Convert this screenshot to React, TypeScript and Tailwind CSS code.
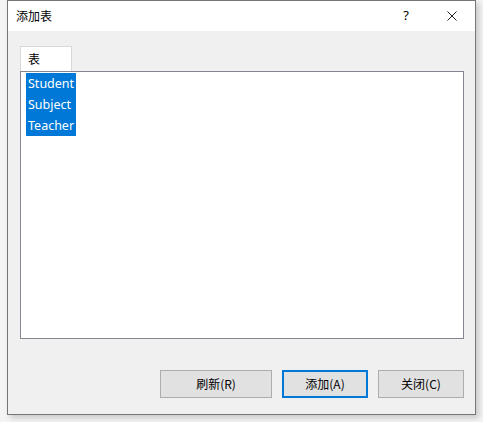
import { useState } from 'react'

const items = ['Student', 'Subject', 'Teacher']

export default function App() {
  const [selected] = useState(items)

  return (
    <div
      className="w-[483px] h-[422px] bg-[#f4f4f4] pl-[7px]"
      style={{ fontFamily: '"Noto Sans", "Noto Sans CJK SC", sans-serif' }}
    >
      <div className="w-[469px] h-[415px] flex flex-col border border-[#767676] bg-[#f0f0f0] shadow-[3px_3px_6px_rgba(0,0,0,0.18)]">
        {/* 标题栏 */}
        <div className="h-[30px] bg-white flex items-center pl-[8px] text-[12px] text-black">
          <span className="flex-1" style={{ fontFamily: '"Noto Sans CJK SC", sans-serif' }}>添加表</span>
          <span className="w-[20px] text-center text-[13px] mr-[31px]">?</span>
          <svg className="w-[10px] h-[10px] mr-[18px]" viewBox="0 0 10 10" fill="none" stroke="#222" strokeWidth="1">
            <path d="M0.5 0.5L9.5 9.5M9.5 0.5L0.5 9.5" />
          </svg>
        </div>

        {/* 内容 */}
        <div className="flex-1 flex flex-col pl-[12px] pt-[15px]">
          <div
            className="w-[52px] h-[25px] bg-white border border-b-0 border-[#d9d9d9] flex items-center pl-[7px] text-[12px] text-black"
            style={{ fontFamily: '"Noto Sans CJK SC", sans-serif' }}
          >
            表
          </div>
          <div className="w-[444px] h-[268px] bg-white border border-[#828790] pl-[5px] pt-[1px]">
            <div className="w-[50px] bg-[#0078d7] text-white">
              {selected.map((name) => (
                <div key={name} className="h-[21px] leading-[21px] text-[12.5px] pl-[2px] whitespace-nowrap">
                  {name}
                </div>
              ))}
            </div>
          </div>

          <div className="flex justify-end gap-[10px] w-[444px] mt-[31px] text-[12px] text-black" style={{ fontFamily: '"Noto Sans CJK SC", sans-serif' }}>
            <button className="w-[112px] h-[28px] bg-[#e1e1e1] border border-[#adadad]">刷新(R)</button>
            <button className="w-[86px] h-[28px] bg-[#e1e1e1] border-2 border-[#0078d7]">添加(A)</button>
            <button className="w-[86px] h-[28px] bg-[#e1e1e1] border border-[#adadad]">关闭(C)</button>
          </div>
        </div>
      </div>
    </div>
  )
}
